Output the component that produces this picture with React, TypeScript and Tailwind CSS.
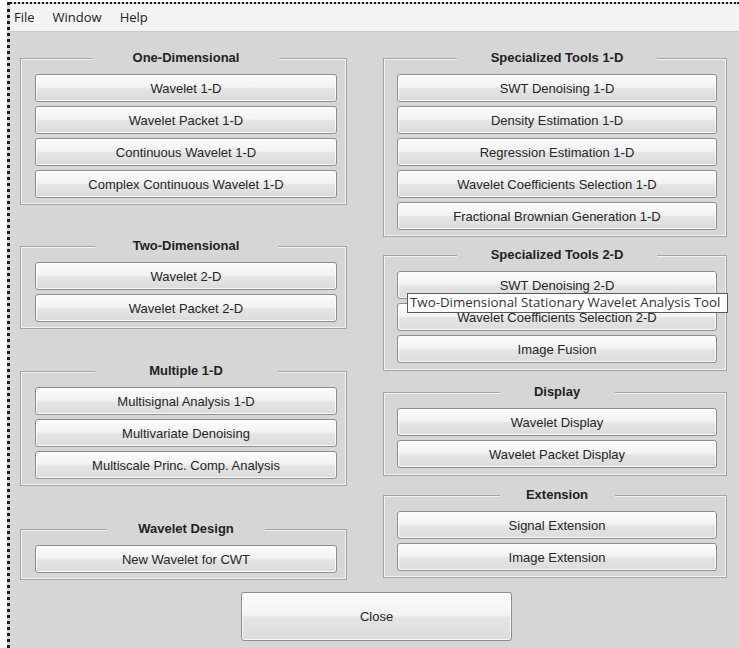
import React from "react";

type Group = {
  title: string;
  legend: string;
  gap: string;
  pad: string;
  items: string[];
};

const leftGroups: Group[] = [
  {
    title: "One-Dimensional",
    legend: "w-[186px]",
    gap: "mt-[18px]",
    pad: "pb-[6px]",
    items: [
      "Wavelet 1-D",
      "Wavelet Packet 1-D",
      "Continuous Wavelet 1-D",
      "Complex Continuous Wavelet 1-D",
    ],
  },
  {
    title: "Two-Dimensional",
    legend: "w-[183px]",
    gap: "mt-[33px]",
    pad: "pb-[6px]",
    items: ["Wavelet 2-D", "Wavelet Packet 2-D"],
  },
  {
    title: "Multiple 1-D",
    legend: "w-[183px]",
    gap: "mt-[34px]",
    pad: "pb-[6px]",
    items: [
      "Multisignal Analysis 1-D",
      "Multivariate Denoising",
      "Multiscale Princ. Comp. Analysis",
    ],
  },
  {
    title: "Wavelet Design",
    legend: "w-[158px]",
    gap: "mt-[35px]",
    pad: "pb-[6px]",
    items: ["New Wavelet for CWT"],
  },
];

const rightGroups: Group[] = [
  {
    title: "Specialized Tools 1-D",
    legend: "w-[200px]",
    gap: "mt-[18px]",
    pad: "pb-[6px]",
    items: [
      "SWT Denoising 1-D",
      "Density Estimation 1-D",
      "Regression Estimation 1-D",
      "Wavelet Coefficients Selection 1-D",
      "Fractional Brownian Generation 1-D",
    ],
  },
  {
    title: "Specialized Tools 2-D",
    legend: "w-[200px]",
    gap: "mt-[10px]",
    pad: "pb-[7px]",
    items: [
      "SWT Denoising 2-D",
      "Wavelet Coefficients Selection 2-D",
      "Image Fusion",
    ],
  },
  {
    title: "Display",
    legend: "w-[115px]",
    gap: "mt-[13px]",
    pad: "pb-[7px]",
    items: ["Wavelet Display", "Wavelet Packet Display"],
  },
  {
    title: "Extension",
    legend: "w-[115px]",
    gap: "mt-[11px]",
    pad: "pb-[6px]",
    items: ["Signal Extension", "Image Extension"],
  },
];

const btnFace =
  "rounded-[3px] border border-[#8d8d8d] bg-[linear-gradient(to_bottom,#fbfbfb_0%,#f3f3f3_46%,#e4e4e4_54%,#dcdcdc_100%)] shadow-[inset_0_0_0_1px_rgba(255,255,255,0.85)] text-[13px] text-[#262626] font-['Liberation_Sans',Arial,sans-serif] leading-none";

function ToolButton({ label }: { label: string }) {
  return (
    <div className="relative">
      <button type="button" className={`${btnFace} h-[28px] w-full`}>
        {label}
      </button>
      {label === "SWT Denoising 2-D" && (
        <div className="absolute left-[10px] top-[22px] z-10 flex h-[20px] w-[321px] items-center border border-[#5a5a5a] bg-white pl-[2px] text-[13.3px] text-[#333] font-['Open_Sans','Noto_Sans',sans-serif] whitespace-nowrap">
          Two-Dimensional Stationary Wavelet Analysis Tool
        </div>
      )}
    </div>
  );
}

function GroupBox({ g, inset }: { g: Group; inset: string }) {
  return (
    <fieldset
      className={`${g.gap} ${g.pad} ${inset} border border-[#a3a3a3] pt-[8px] shadow-[inset_0_0_0_1px_#f2f2f2]`}
    >
      <legend
        className={`${g.legend} mx-auto h-[16px] bg-[#d6d6d6] text-center text-[13px] font-bold leading-[16px] text-[#222] font-['Liberation_Sans',Arial,sans-serif]`}
      >
        {g.title}
      </legend>
      <div className="flex flex-col gap-[4px]">
        {g.items.map((it) => (
          <ToolButton key={it} label={it} />
        ))}
      </div>
    </fieldset>
  );
}

export default function App() {
  return (
    <div className="h-[648px] w-[739px] overflow-hidden bg-white pl-[7px] pt-[2px]">
      <div className="flex h-full flex-col border-l-[3px] border-t-2 border-dotted border-[#1e1e1e] bg-[#d6d6d6]">
        {/* menu bar */}
        <div className="flex h-[28px] items-center gap-[18px] border-b border-[#c9c9c9] bg-[#f3f3f3] pl-[4px] text-[13px] text-[#222] font-['Open_Sans','Noto_Sans',sans-serif]">
          <span>File</span>
          <span>Window</span>
          <span>Help</span>
        </div>

        {/* tool groups */}
        <div className="flex items-start gap-[36px] pl-[10px]">
          <div className="flex w-[327px] flex-col">
            {leftGroups.map((g) => (
              <GroupBox key={g.title} g={g} inset="pl-[14px] pr-[9px]" />
            ))}
          </div>
          <div className="flex w-[344px] flex-col">
            {rightGroups.map((g) => (
              <GroupBox key={g.title} g={g} inset="pl-[13px] pr-[9px]" />
            ))}
          </div>
        </div>

        {/* close */}
        <div className="mt-[12px] flex justify-center pl-[4px]">
          <button type="button" className={`${btnFace} h-[49px] w-[271px]`}>
            Close
          </button>
        </div>
      </div>
    </div>
  );
}
